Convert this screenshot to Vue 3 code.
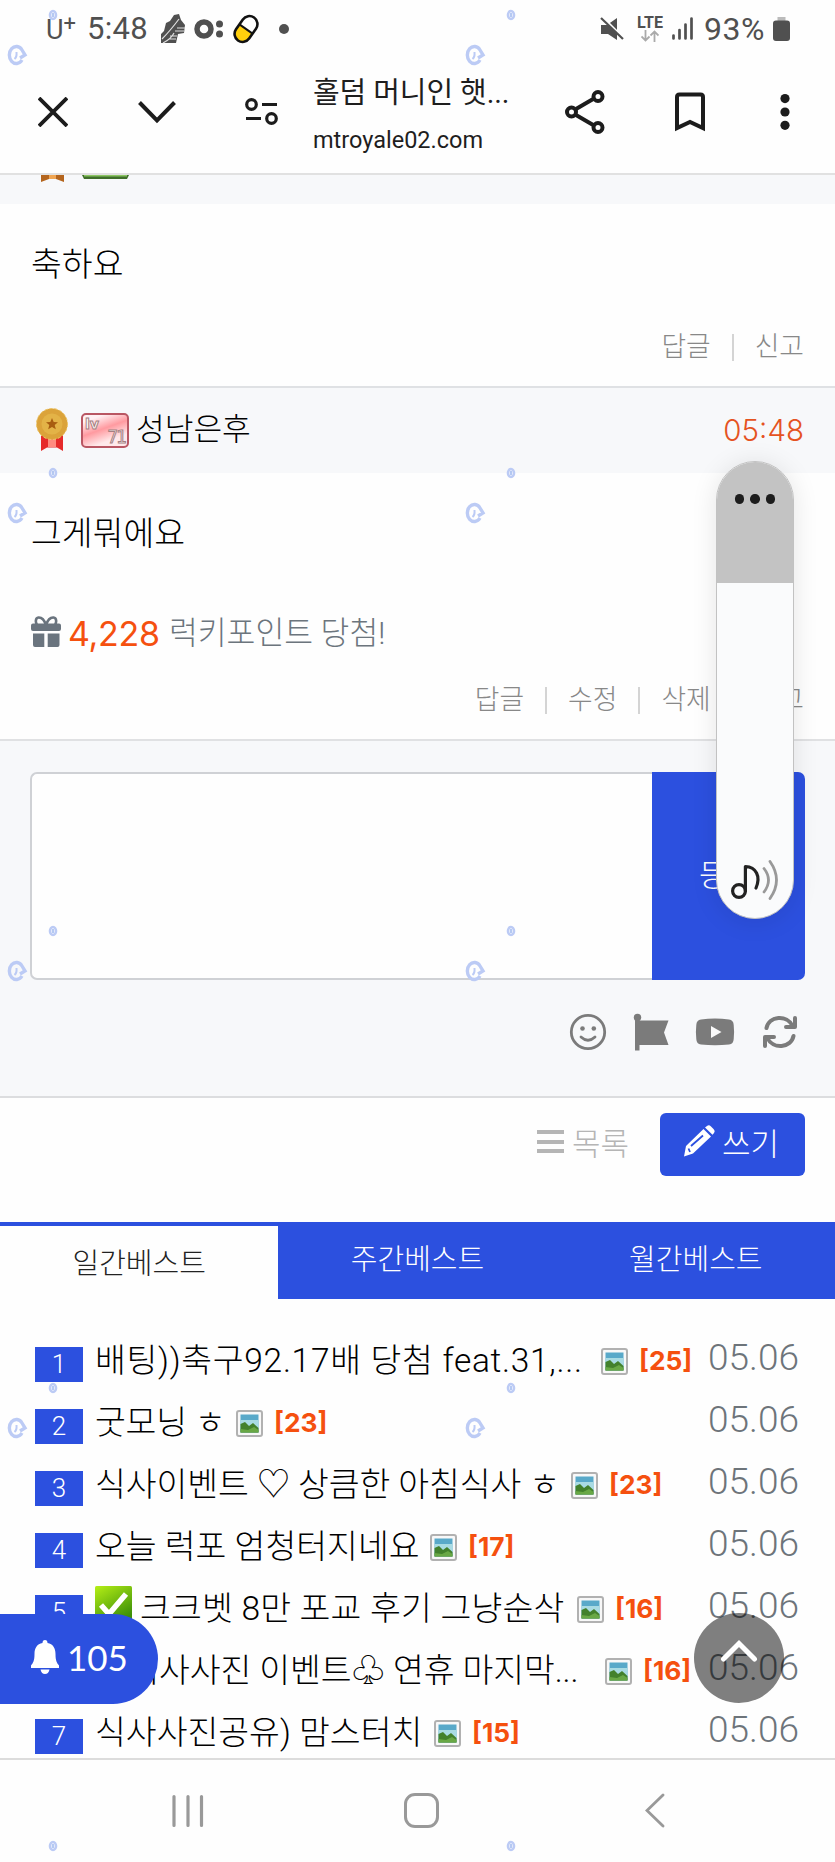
<script setup>
const rows = [
  { n: 1, title: '배팅))축구92.17배 당첨 feat.31,...', c: '[25]', w: 506, ls: 0.7 },
  { n: 2, title: '굿모닝 ㅎ', c: '[23]', w: 141, ls: -0.2 },
  { n: 3, title: '식사이벤트 ♡ 상큼한 아침식사 ㅎ', c: '[23]', w: 476, ls: -0.1 },
  { n: 4, title: '오늘 럭포 엄청터지네요', c: '[17]', w: 335, ls: 0 },
  { n: 5, title: '크크벳 8만 포교 후기 그냥순삭', c: '[16]', w: 482, ls: 0.2, check: true },
  { n: 6, title: '♧식사사진 이벤트♧ 연휴 마지막...', c: '[16]', w: 510, ls: -0.1 },
  { n: 7, title: '식사사진공유) 맘스터치', c: '[15]', w: 339, ls: 0 },
]
const marks = []
for (let r = 0; r < 5; r++) for (let c = 0; c < 2; c++) marks.push({ x: c * 457.5, y: r * 457.8 })
</script>

<template>
  <div class="screen">
    <header class="status">
      <span class="carrier">U<sup>+</sup></span>
      <span class="clock">5:48</span>
      <svg class="feather" width="24" height="30" viewBox="0 0 24 30">
        <path d="M0 29V20L3 17 5 9 9 7 13 1 18 0 20 6 24 11 23 19 17 20 15 29Z" fill="#505050" />
        <path d="M1 25Q9 17 18 5M2 29Q10 25 13 19M9 22h7M8 25h7M14 17h9M16 14h8" stroke="#e0e0e0" stroke-width="1.2" fill="none" />
      </svg>
      <svg class="ocolon" width="30" height="20" viewBox="0 0 30 20">
        <circle cx="10" cy="10" r="7" fill="none" stroke="#505050" stroke-width="5.5" />
        <circle cx="25.5" cy="5" r="3.5" fill="#505050" /><circle cx="25.5" cy="15" r="3.5" fill="#505050" />
      </svg>
      <svg class="pill" width="28" height="30" viewBox="0 0 28 30">
        <g transform="rotate(35 14 15)">
          <rect x="6" y="1" width="16" height="28" rx="8" fill="#fff" />
          <path d="M6 15h16v6a8 8 0 0 1-16 0Z" fill="#ffcf0d" />
          <rect x="6" y="1" width="16" height="28" rx="8" fill="none" stroke="#111" stroke-width="2.6" />
          <path d="M6 15h16" stroke="#111" stroke-width="2" />
        </g>
      </svg>
      <i class="dot"></i>
      <div class="sys">
        <svg width="24" height="24" viewBox="0 0 24 24">
          <path d="M1 8H7L17 1V23L8 17H1Z" fill="#505050" />
          <path d="M2 0L24 22" stroke="#fff" stroke-width="3" /><path d="M1 1L23 22" stroke="#505050" stroke-width="2.2" />
        </svg>
        <div class="lte">
          <b>LTE</b>
          <svg width="18" height="12" viewBox="0 0 18 12" fill="none" stroke="#aaa" stroke-width="1.8"><path d="M4.500 0V10.500M0.500 6.500L4.500 10.500L8.500 6.500M13.500 12V1.500M9.500 5.500L13.500 1.500L17.500 5.500" /></svg>
        </div>
        <svg class="signal" width="21" height="23" viewBox="0 0 21 23" stroke="#505050" stroke-width="2.7" stroke-linecap="round"><path d="M1.500 18.500V21.500M7.500 13V21.500M13.500 7.500V21.500M19.500 1.500V21.500" /></svg>
        <span class="pct">93%</span>
        <svg width="17" height="24" viewBox="0 0 17 24"><path d="M4.500 0h8v4h-8z" fill="#bbb" /><rect y="3.500" width="17" height="20.500" rx="3" fill="#505050" /></svg>
      </div>
    </header>

    <nav class="toolbar">
      <svg class="close" width="30" height="30" viewBox="0 0 30 30" stroke="#1c1c1c" stroke-width="3.8"><path d="M1 1L29 29M29 1L1 29" /></svg>
      <svg class="down" width="38" height="23" viewBox="0 0 38 23" fill="none" stroke="#1c1c1c" stroke-width="4"><path d="M1.500 1.500L19 19.500L36.500 1.500" /></svg>
      <svg class="tune" width="33" height="28" viewBox="0 0 33 28" fill="none" stroke="#1c1c1c" stroke-width="3.200">
        <circle cx="6.500" cy="6.500" r="4.800" /><path d="M17 6.500H32M1 20.500H16" /><circle cx="26.500" cy="20.500" r="4.800" />
      </svg>
      <div class="page">
        <div class="ptitle">홀덤 머니인 햇...</div>
        <div class="purl">mtroyale02.com</div>
      </div>
      <svg class="share" width="40" height="44" viewBox="0 0 40 44" fill="none" stroke="#1c1c1c" stroke-width="4">
        <path d="M11 19L29 8.500M11 25L29 35.500" /><circle cx="6.500" cy="22" r="4.500" /><circle cx="33" cy="6.500" r="4.500" /><circle cx="33" cy="37.500" r="4.500" />
      </svg>
      <svg class="bookmark" width="32" height="40" viewBox="0 0 32 40" fill="none" stroke="#1c1c1c" stroke-width="4"><path d="M3 36V5Q3 2.500 5.500 2.500H26.500Q29 2.500 29 5V36L16 30Z" /></svg>
      <svg class="more" width="10" height="36" viewBox="0 0 10 36" fill="#1c1c1c"><circle cx="5" cy="4.600" r="4.600" /><circle cx="5" cy="18" r="4.600" /><circle cx="5" cy="31.300" r="4.600" /></svg>
    </nav>

    <main>
      <div class="strip">
        <svg width="90" height="8" viewBox="0 0 90 8"><path d="M0 0H23V7L15 4H8L0 7Z" fill="#b4651d" /><path d="M8 0h7v4H8z" fill="#f0a552" /><path d="M41 0H88L86 4H43Z" fill="#3f6f2a" /><path d="M43 0H86V1.500H43Z" fill="#8cc663" /></svg>
      </div>
      <section class="comment first">
        <p class="body">축하요</p>
        <div class="actions"><span>답글</span><span>신고</span></div>
      </section>

      <div class="who">
        <svg class="medal" width="34" height="44" viewBox="0 0 34 44">
          <path d="M6 25H28V43L22 39.500H12L6 43Z" fill="#e62a2a" /><path d="M13 30h8v9h-8z" fill="#ff8b80" />
          <circle cx="17" cy="16" r="15.500" fill="#dba33a" stroke="#edc566" stroke-width="1" stroke-dasharray="3 2" />
          <circle cx="17" cy="16" r="10.500" fill="#e3b347" /><path d="M17 10L18.700 14 23 14.300 19.700 17 20.800 21.200 17 19 13.200 21.200 14.300 17 11 14.300 15.300 14Z" fill="#a85d10" />
        </svg>
        <div class="level"><small>lv</small><b>71</b></div>
        <span class="name">성남은후</span>
        <time>05:48</time>
      </div>

      <section class="comment second">
        <p class="body">그게뭐에요</p>
        <div class="lucky">
          <svg width="30" height="31" viewBox="0 0 30 31" fill="#6a747e">
            <path d="M2 7.500H28Q30 7.500 30 9.500V13Q30 15 28 15H2Q0 15 0 13V9.500Q0 7.500 2 7.500ZM2 17.500H13.300V31H4Q2 31 2 29ZM16.700 17.500H28.500V29Q28.500 31 26.500 31H16.700Z" />
            <path d="M15 9C13 3 10 1.300 7.500 1.500C4 2 4.500 7 6 8.500M15 9C17 3 20 1.300 22.500 1.500C26 2 25.500 7 24 8.500" fill="none" stroke="#6a747e" stroke-width="2.600" />
          </svg>
          <strong>4,228</strong><span>럭키포인트 당첨!</span>
        </div>
        <div class="actions"><span>답글</span><span>수정</span><span>삭제</span><span>신고</span></div>
      </section>

      <section class="form">
        <div class="inputrow"><div class="area"></div><div class="submit">등록</div></div>
        <div class="tools">
          <svg width="38" height="38" viewBox="0 0 38 38" fill="none" stroke="#7b7b7b" stroke-width="2.800" stroke-linecap="round"><circle cx="19" cy="19" r="16.700" /><path d="M12 24Q19 30.500 26 24" /><circle cx="13.500" cy="15.500" r="2.300" fill="#7b7b7b" stroke="none" /><circle cx="24.800" cy="15.500" r="2.300" fill="#7b7b7b" stroke="none" /></svg>
          <svg width="36" height="38" viewBox="0 0 36 38" fill="#7b7b7b"><circle cx="4.500" cy="4.500" r="3.700" /><path d="M2 4H6.500V7.500H35.500L31 19.500L35.500 32H6.500V37.500H2Z" /></svg>
          <svg width="40" height="38" viewBox="0 0 40 38"><path d="M6 6.500Q20 4.500 34 6.500Q38.500 7 38.700 12Q39.500 19 38.700 26Q38.500 31 34 31.500Q20 33 6 31.500Q1.500 31 1.300 26Q.5 19 1.300 12Q1.500 7 6 6.500Z" fill="#7b7b7b" /><path d="M16 13L26.500 19L16 25Z" fill="#fafafa" /></svg>
          <svg width="38" height="38" viewBox="0 0 38 38" fill="none" stroke="#7b7b7b" stroke-width="4" stroke-linecap="round" stroke-linejoin="round"><path d="M5.500 15C8 3 26 1 32 13.500M34 5V14H25M32.500 23C30 35 12 37 6 24.500M4 33V24H13" /></svg>
        </div>
      </section>

      <div class="buttons">
        <div class="list"><i></i>목록</div>
        <div class="write">
          <svg width="32" height="32" viewBox="0 0 32 32" fill="#fff"><path d="M22 2.500L24 1Q26-.5 28 1.500L30.500 4Q32.500 6 31 8L29.500 9.800ZM20.500 4L28 11.500L10 28.500L1 31.500L3 21Z" /><path d="M8 21L20 10.500M7 27L5.500 23.500" stroke="#2c50df" stroke-width="1.800" /></svg>
          쓰기
        </div>
      </div>

      <div class="tabs"><div class="tab on">일간베스트</div><div class="tab">주간베스트</div><div class="tab">월간베스트</div></div>

      <div class="ranking">
        <div v-for="r in rows" :key="r.n" class="row">
          <span class="num">{{ r.n }}</span>
          <span class="title" :style="{ width: r.w + 'px', letterSpacing: r.ls + 'px' }"><svg v-if="r.check" class="check" width="37" height="37" viewBox="0 0 37 37"><defs><linearGradient id="g" x2=".6" y2="1"><stop stop-color="#b5ef16" /><stop offset="1" stop-color="#3c8f08" /></linearGradient></defs><rect width="37" height="37" rx="1.500" fill="url(#g)" /><path d="M6 19L14 28L31 8" fill="none" stroke="#fff" stroke-width="5.500" /></svg>{{ r.title }}</span>
          <svg class="pic" width="27" height="27" viewBox="0 0 27 27">
            <rect x="1" y="1" width="25" height="25" rx="2" fill="#f8f8f8" stroke="#b1b1b1" stroke-width="2" />
            <rect x="4.500" y="4.500" width="18" height="18" fill="#59a9c9" /><path d="M4.500 10H22.500V18H4.500Z" fill="#a9dbe3" /><path d="M4.500 14L9 12L13 16L17 13L22.500 18V22.500H4.500Z" fill="#43812c" /><path d="M4.500 19L12 20L18 17L22.500 20V22.500H4.500Z" fill="#69a845" />
          </svg>
          <b class="count">{{ r.c }}</b>
          <span class="date">05.06</span>
        </div>
      </div>
    </main>

    <footer class="navbar">
      <svg width="32" height="34" viewBox="0 0 32 34" stroke="#999" stroke-width="3.200" stroke-linecap="round"><path d="M2 2.500V31.500M16 2.500V31.500M29.500 2.500V31.500" /></svg>
      <svg class="home" width="35" height="35" viewBox="0 0 35 35" fill="none" stroke="#999" stroke-width="3"><rect x="1.500" y="1.500" width="32" height="32" rx="9.500" /></svg>
      <svg class="back" width="20" height="35" viewBox="0 0 20 35" fill="none" stroke="#999" stroke-width="2.800" stroke-linecap="round"><path d="M18 2L2 17.500L18 33" /></svg>
    </footer>

    <div class="alarm">
      <svg width="30" height="34" viewBox="0 0 30 34" fill="#fff"><path d="M15 0Q17.500 0 17.500 3C23 4 25.500 8 25.500 14C25.500 21 27 23 29 25.500V28H1V25.500C3 23 4.500 21 4.500 14C4.500 8 7 4 12.500 3Q12.500 0 15 0ZM10.500 29.500H19.500Q18.500 34 15 34Q11.500 34 10.500 29.500Z" /></svg>
      <span>105</span>
    </div>
    <div class="top"><svg width="38" height="24" viewBox="0 0 38 24" fill="none" stroke="#fff" stroke-width="5" stroke-linecap="round"><path d="M3.500 20L19 4.500L34.500 20" /></svg></div>

    <div class="volume">
      <div class="level-off"><i></i><i></i><i></i></div>
      <svg width="48" height="42" viewBox="0 0 48 42" fill="none" stroke="#222" stroke-width="3.200" stroke-linecap="round" stroke-linejoin="round">
        <circle cx="8" cy="32" r="6.400" /><path d="M14.400 32V7.500C25 8 30 17 25 29" />
        <path d="M33 9.500Q42 21 33 33M39 2.500Q52 21 39 39.500" stroke="#999" stroke-width="2.800" />
      </svg>
    </div>

    <svg v-for="(m, i) in marks" :key="i" class="mark" :style="{ left: m.x + 'px', top: m.y + 'px' }" width="64" height="72" viewBox="0 0 64 72" fill="none">
      <path d="M22 60A7 8.500 0 1 1 22 50L25 55L20 58" stroke="#bccbf5" stroke-width="3.400" /><path d="M14.500 59Q17 57 16.500 52" stroke="#bccbf5" stroke-width="2" />
      <ellipse cx="53" cy="15" rx="3" ry="4" stroke="#bccbf5" stroke-width="2.600" /><path d="M53 13V17" stroke="#9db7ee" stroke-width="1.500" />
    </svg>
  </div>
</template>

<style>
body { margin: 0; }
</style>
<style scoped>
* { box-sizing: border-box; }
svg { display: block; flex: none; }
p { margin: 0; }
.screen { position: relative; width: 835px; height: 1862px; overflow: hidden; display: flex; flex-direction: column; background: #fefefe; color: #000; font-family: Roboto, "Noto Sans CJK KR", sans-serif; font-weight: 300; white-space: nowrap; }
.status { height: 57px; flex: none; display: flex; align-items: center; padding-left: 46px; color: #505050; font-size: 30px; font-weight: 400; }
.carrier { width: 41px; font-size: 27px; line-height: 30px; padding-top: 3px; }
.carrier sup { font-size: 22px; line-height: 0; vertical-align: 8px; }
.clock { width: 74px; font-size: 31px; letter-spacing: .3px; }
.ocolon { margin-left: 9px; }
.pill { margin-left: 8px; }
.dot { width: 10px; height: 10px; border-radius: 5px; background: #505050; margin-left: 19px; }
.sys { margin-left: auto; padding-right: 45px; display: flex; align-items: center; }
.lte { width: 26px; margin-left: 13px; display: flex; flex-direction: column; align-items: center; font-size: 16px; line-height: 14px; }
.signal { margin-left: 9px; }
.pct { margin: 0 5px 0 11px; width: 64px; font-size: 32px; letter-spacing: .5px; }
.toolbar { height: 118px; flex: none; display: flex; align-items: center; padding: 0 45px 6px 38px; border-bottom: 2px solid #e1e1e1; }
.down { margin-left: 70px; }
.tune { margin-left: 69px; }
.page { margin-left: 35px; width: 218px; height: 84px; color: #1e1e1e; font-weight: 400; }
.ptitle { font-size: 29px; line-height: 44px; height: 44px; padding-top: 1px; letter-spacing: -.1px; }
.purl { font-size: 23.500px; line-height: 40px; margin-top: 6px; }
.share { margin-left: 34px; }
.bookmark { margin-left: 69px; }
.more { margin-left: auto; }
main { height: 1583px; overflow: hidden; flex: none; }
.strip { height: 29px; background: #f7f8fa; padding-left: 41px; }
.comment { padding: 0 31px; display: flex; flex-direction: column; background: #fefefe; }
.first { height: 184px; border-bottom: 2px solid #dfe1e4; }
.body { font-size: 33.500px; line-height: 40px; }
.first .body { margin-top: 41px; }
.actions { display: flex; justify-content: flex-end; align-items: center; height: 27px; font-size: 26.800px; line-height: 27px; color: #888; }
.actions span + span { margin-left: 21px; padding-left: 21px; border-left: 2px solid #d4d4d4; }
.first .actions { margin-top: 49px; }
.who { height: 85px; background: #f7f8fa; display: flex; align-items: center; padding: 0 31px 1px 35px; }
.level { margin: 0 7px 0 12px; width: 48px; height: 35px; border: 2px solid #b95763; border-radius: 5px; background: linear-gradient(160deg, #fff1f3 15%, #ff9aa0 45%, #ffe9ea 75%); display: flex; justify-content: space-between; padding: 0 2px; color: #fff; font-family: "DejaVu Sans", sans-serif; -webkit-text-stroke: 1px #a58080; }
.level small { font-size: 14px; font-weight: bold; line-height: 18px; }
.level b { font-size: 17px; line-height: 44px; letter-spacing: -2px; }
.name { font-size: 31.200px; padding-bottom: 8px; }
time { margin-left: auto; color: #e5531f; font-size: 29.500px; font-family: Inter, sans-serif; padding-bottom: 1px; }
.second { height: 268px; border-bottom: 2px solid #e0e1e3; }
.second .body { margin-top: 41px; }
.lucky { display: flex; align-items: center; height: 40px; margin-top: 59px; font-size: 31.300px; color: #6c757d; }
.lucky strong { font: 400 34px Inter, sans-serif; color: #f5500f; width: 108px; padding-left: 7px; letter-spacing: -.3px; }
.lucky span { padding-bottom: 5px; }
.lucky svg { margin-top: -4px; }
.second .actions { margin-top: 34px; }
.form { height: 357px; border-bottom: 2px solid #dcdddf; background: #f7f8fa; padding: 31px 30px 0; }
.inputrow { display: flex; height: 208px; }
.area { width: 622px; border: 2px solid #cfd1d5; border-right: 0; border-radius: 7px 0 0 7px; background: #fefefe; }
.submit { flex: 1; display: flex; align-items: center; justify-content: center; background: #2c50df; border-radius: 0 7px 7px 0; color: #fff; font-size: 31px; padding: 0 2px 7px 0; }
.tools { display: flex; justify-content: flex-end; margin: 33px 6px 0 0; gap: 26px; }
.buttons { height: 124px; display: flex; justify-content: flex-end; padding: 15px 30px 0 0; }
.list { display: flex; align-items: center; height: 56px; color: #b5b5b5; font-size: 31px; }
.list i { width: 27px; height: 23px; border-top: 4px solid #b5b5b5; border-bottom: 4px solid #b5b5b5; margin-right: 8px; background: linear-gradient(transparent 5.500px, #b5b5b5 5.500px 9.500px, transparent 9.500px); }
.write { width: 145px; height: 63px; margin-left: 31px; border-radius: 6px; background: #2c50df; color: #fff; display: flex; align-items: center; padding: 0 0 7px 23px; gap: 7px; font-size: 31px; }
.tabs { height: 77px; display: flex; background: #2c50df; }
.tab { flex: 1; text-align: center; color: #fff; font-size: 29px; line-height: 77px; height: 77px; }
.on { background: #fefefe; border-top: 4px solid #2c50df; color: #222; }
.ranking { padding: 34px 36px 0 35px; }
.row { display: flex; height: 62px; align-items: center; }
.num { width: 48px; height: 35px; margin: 0 12px 0 0; background: #2c50df; color: #fff; font-size: 26px; line-height: 35px; text-align: center; }
.title { font-size: 33.500px; line-height: 62px; height: 62px; margin-top: -6px; overflow: hidden; }
.check { display: inline-block; vertical-align: -3px; margin-right: 8px; }
.pic { margin: -6px 11px 0 0; }
.count { font-family: Inter, sans-serif; font-size: 26.300px; font-weight: 700; color: #f5500f; margin-top: -7px; }
.date { margin-left: auto; font-size: 37px; line-height: 50px; margin-top: -12px; color: #6d747a; font-family: Roboto, sans-serif; }
.navbar { height: 104px; border-top: 2px solid #dcdcdc; display: flex; align-items: center; padding: 0 0 1px 172px; }
.home { margin-left: 200px; }
.back { margin-left: 206px; }
.alarm { position: absolute; left: 0; top: 1614px; width: 158px; height: 90px; border-radius: 0 45px 45px 0; background: #2c50df; color: #fff; display: flex; align-items: center; padding: 0 0 4px 30px; font: 400 35px Lato, sans-serif; gap: 7px; }
.top { position: absolute; left: 694px; top: 1613px; width: 90px; height: 90px; border-radius: 45px; background: rgba(0, 0, 0, .5); display: flex; justify-content: center; padding-top: 26px; }
.volume { position: absolute; left: 716px; top: 461px; width: 78px; height: 458px; border-radius: 39px; background: #fafbfc; overflow: hidden; border: 1px solid #c2c2c2; box-shadow: 0 2px 26px rgba(0, 0, 0, .1); display: flex; flex-direction: column; justify-content: space-between; align-items: center; padding-bottom: 17px; }
.level-off { width: 78px; height: 121px; background: #c3c3c3; display: flex; justify-content: center; gap: 6px; padding-top: 32px; }
.level-off i { width: 9.500px; height: 9.500px; border-radius: 50%; background: #1d1d1d; }
.mark { position: absolute; }
</style>
